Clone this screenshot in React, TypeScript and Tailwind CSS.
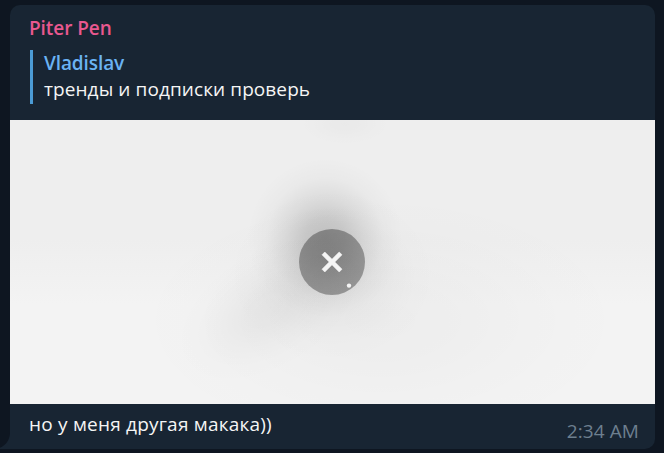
interface Reply {
  author: string
  text: string
}

interface Message {
  author: string
  reply: Reply
  caption: string
  time: string
}

const MESSAGE: Message = {
  author: 'Piter Pen',
  reply: { author: 'Vladislav', text: 'тренды и подписки проверь' },
  caption: 'но у меня другая макака))',
  time: '2:34 AM',
}

export default function App() {
  return (
    <main className="flex h-[453px] w-[664px] flex-col overflow-hidden bg-[#0e1621] px-[10px] pt-[5px] font-['Open_Sans','Noto_Sans',sans-serif] text-[19px] leading-[26px]">
      <MessageBubble message={MESSAGE} />
    </main>
  )
}

function MessageBubble({ message }: { message: Message }) {
  return (
    <article className="relative flex h-[444px] w-[645px] flex-col rounded-[10px] rounded-bl-none bg-[#182533]">
      <header className="h-[115px] px-5 pt-[10px]">
        <h2 className="-ml-px font-semibold tracking-[-0.06px] text-[#e9588f]">
          {message.author}
        </h2>
        <ReplyPreview reply={message.reply} />
      </header>

      <MediaPreview />

      <footer className="flex justify-between pr-4 pl-[19px]">
        <p className="pt-[7px] tracking-[0.21px] text-[#f5f5f5]">{message.caption}</p>
        <time className="pt-[14px] tracking-[0.1px] text-[#6d7f8f]">{message.time}</time>
      </footer>

      <BubbleTail />
    </article>
  )
}

function ReplyPreview({ reply }: { reply: Reply }) {
  return (
    <blockquote className="mt-[9px] h-[54px] border-l-[3px] border-[#4b9bd5] pl-[11px]">
      <p className="font-semibold tracking-[-0.1px] text-[#6ab3f3]">{reply.author}</p>
      <p className="tracking-[0.09px] text-[#f5f5f5]">{reply.text}</p>
    </blockquote>
  )
}

/** Blurred thumbnail with the cancel-download button in the middle. */
function MediaPreview() {
  return (
    <div className="relative h-[284px] shrink-0">
      <svg className="block h-full w-full" viewBox="0 0 645 284" aria-hidden="true">
        <defs>
          <linearGradient id="base" x1="0" y1="0" x2="0" y2="1">
            <stop offset="0" stopColor="#eeeeee" />
            <stop offset="0.42" stopColor="#eeeeee" />
            <stop offset="0.65" stopColor="#f3f3f3" />
            <stop offset="1" stopColor="#f3f3f3" />
          </linearGradient>
          <radialGradient id="shade">
            <stop offset="0" stopColor="#000" stopOpacity="1" />
            <stop offset="0.25" stopColor="#000" stopOpacity="0.82" />
            <stop offset="0.5" stopColor="#000" stopOpacity="0.43" />
            <stop offset="0.75" stopColor="#000" stopOpacity="0.12" />
            <stop offset="1" stopColor="#000" stopOpacity="0" />
          </radialGradient>
        </defs>
        <rect width="645" height="284" fill="url(#base)" />
        <ellipse cx="370" cy="200" rx="270" ry="140" fill="url(#shade)" opacity="0.025" />
        <ellipse cx="335" cy="4" rx="52" ry="24" fill="url(#shade)" opacity="0.02" />
        <ellipse cx="315" cy="118" rx="78" ry="80" fill="url(#shade)" opacity="0.17" />
        <ellipse cx="322" cy="155" rx="105" ry="88" fill="url(#shade)" opacity="0.06" />
        <ellipse
          cx="260"
          cy="188"
          rx="108"
          ry="62"
          transform="rotate(-32 260 188)"
          fill="url(#shade)"
          opacity="0.045"
        />
      </svg>
      <button
        type="button"
        aria-label="Cancel"
        className="absolute top-[109px] left-[289px] h-[66px] w-[66px] rounded-full bg-black/32"
      >
        <svg viewBox="0 0 66 66" className="h-full w-full" aria-hidden="true">
          <path
            d="M25.8 23 33 30.2 40.2 23 43 25.8 35.8 33 43 40.2 40.2 43 33 35.8 25.8 43 23 40.2 30.2 33 23 25.8Z"
            fill="#f5f5f5"
            stroke="#f5f5f5"
            strokeWidth="0.6"
            strokeLinejoin="round"
          />
          <circle cx="50" cy="56.6" r="2.2" fill="#f5f5f5" />
        </svg>
      </button>
    </div>
  )
}

function BubbleTail() {
  return (
    <svg
      className="absolute bottom-0 left-[-10px] h-[16px] w-[10px]"
      viewBox="0 0 10 16"
      aria-hidden="true"
    >
      <path d="M10 0C9.8 7 6 12 0 14.8V16H10Z" fill="#182533" />
    </svg>
  )
}
